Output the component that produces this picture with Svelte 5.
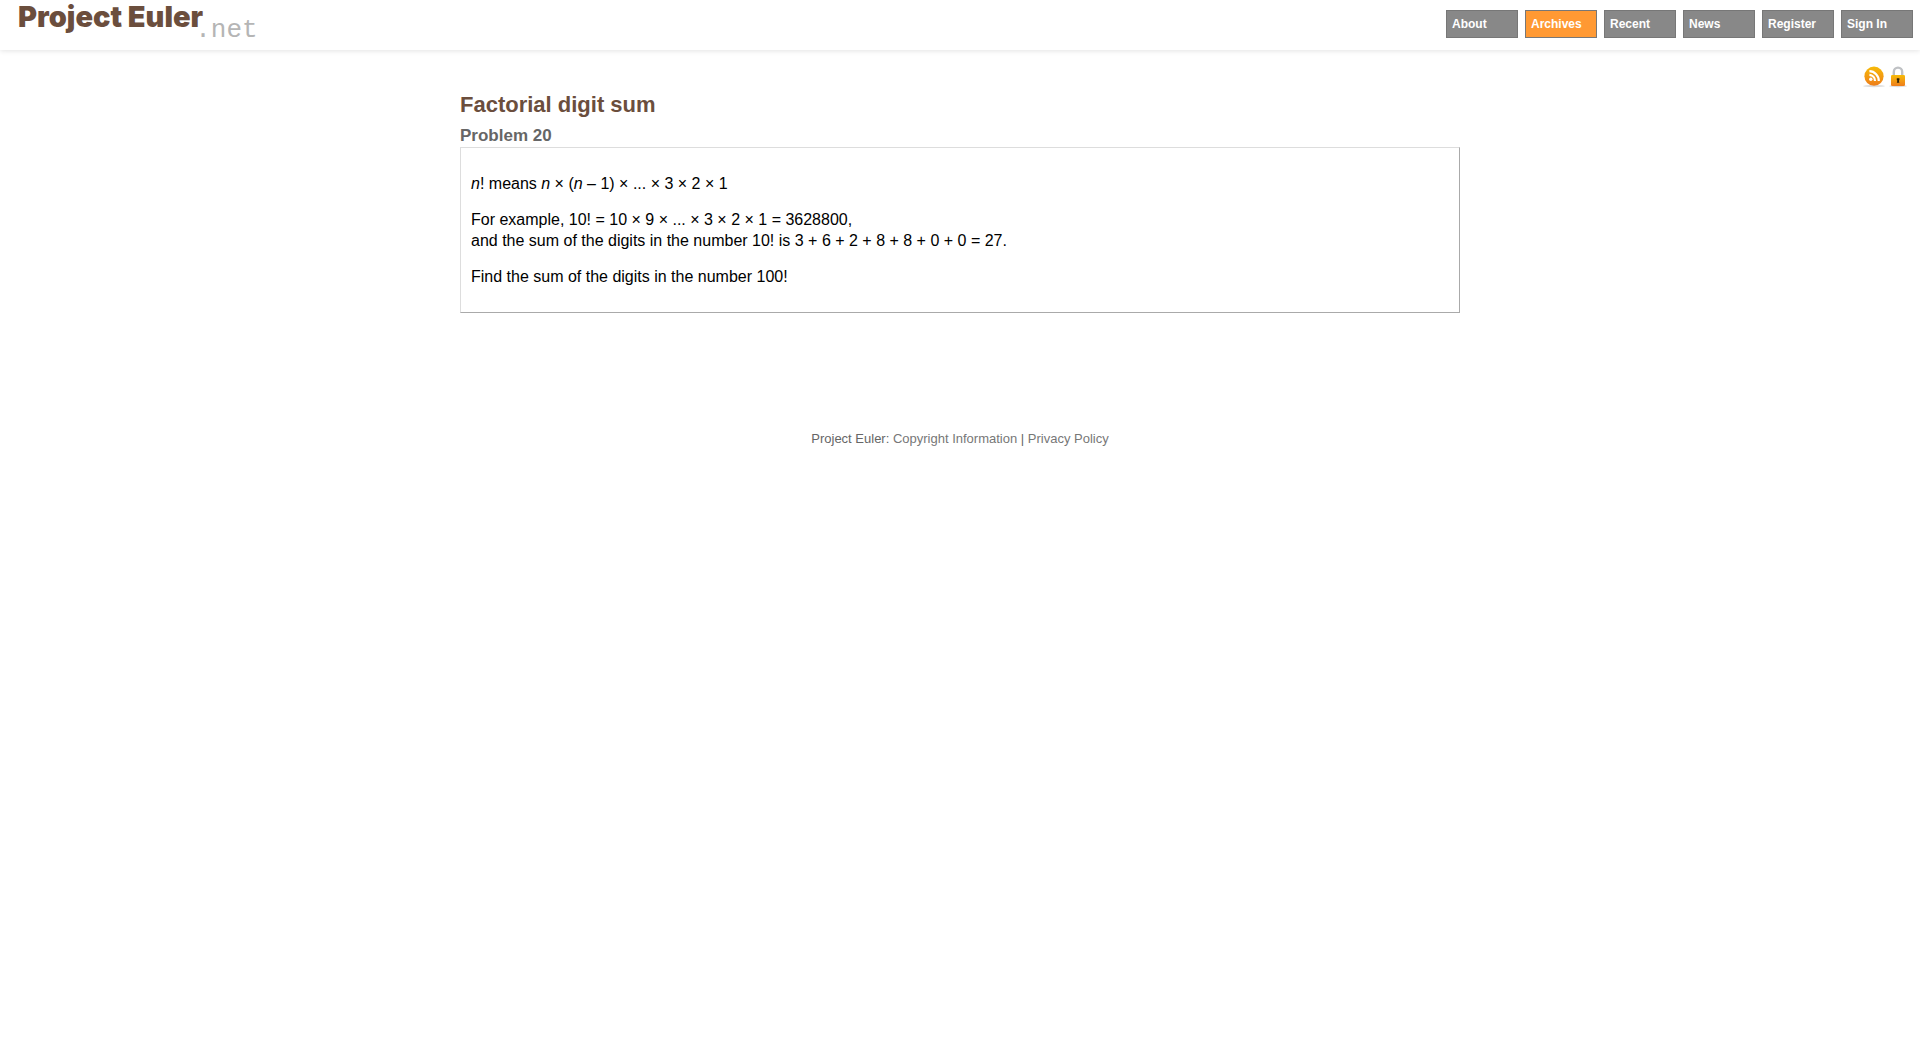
<script>
  const links = ['About', 'Archives', 'Recent', 'News', 'Register', 'Sign In'];
  const current = 'Archives';
</script>

<svelte:head><title>Problem 20 - Project Euler</title></svelte:head>

<header>
  <a class="logo" href="#home"><span class="name">Project Euler</span><span class="net">.net</span></a>
  <nav aria-label="Main">
    {#each links as link}
      <a href={'#' + link} class:current={link === current}>{link}</a>
    {/each}
  </nav>
</header>

<div class="tools">
  <a href="#rss" aria-label="RSS feed">
    <svg width="22" height="22" viewBox="0 0 22 22">
      <defs>
        <linearGradient id="gold" x1="0" y1="0" x2="0" y2="1">
          <stop offset="0" stop-color="#f7bb08" />
          <stop offset="1" stop-color="#ee7d1b" />
        </linearGradient>
      </defs>
      <ellipse cx="11" cy="20" rx="11" ry="1.2" fill="#ddd" />
      <circle cx="11" cy="10.2" r="9.6" fill="url(#gold)" />
      <circle cx="7.8" cy="13.2" r="1.7" fill="#fff" />
      <path d="M6.4 8.9a6 6 0 0 1 5.6 6M6.4 5.2a9.6 9.6 0 0 1 9.4 9.8" fill="none" stroke="#fff" stroke-width="2.2" />
    </svg>
  </a>
  <a href="#secure" aria-label="Secure connection">
    <svg width="18" height="22" viewBox="0 0 18 22">
      <ellipse cx="9" cy="20" rx="9" ry="1.2" fill="#ddd" />
      <path d="M4.8 10V6a4.2 4.4 0 0 1 8.4 0v4" fill="none" stroke="#bfc1c4" stroke-width="2.4" />
      <rect x="2" y="9" width="14" height="11" rx="1.2" fill="url(#gold)" />
      <path d="M7.8 12.2h2.6v1.8l-.6.8.6 2h-2.6l.6-2-.6-.8z" fill="#2d2107" />
    </svg>
  </a>
</div>

<main>
  <h1>Factorial digit sum</h1>
  <h2>Problem 20</h2>
  <section class="problem">
    <p><i>n</i>! means <i>n</i> × (<i>n</i> – 1) × ... × 3 × 2 × 1</p>
    <p>For example, 10! = 10 × 9 × ... × 3 × 2 × 1 = 3628800,<br />and the sum of the digits in the number 10! is 3 + 6 + 2 + 8 + 8 + 0 + 0 = 27.</p>
    <p>Find the sum of the digits in the number 100!</p>
  </section>
</main>

<footer>Project Euler: <a href="#copyright">Copyright Information</a> | <a href="#privacy">Privacy Policy</a></footer>

<style>
  :global(body) {
    background: #fff;
    color: #000;
    font: 16px/21px "Liberation Sans", Arial, sans-serif;
  }
  a {
    text-decoration: none;
  }
  header {
    display: flex;
    justify-content: space-between;
    align-items: flex-start;
    box-sizing: border-box;
    min-height: 50px;
    padding: 0 7px 0 18px;
    box-shadow: 0 1px 5px #e4e4e4;
  }
  .logo {
    display: flex;
    align-items: flex-start;
  }
  .name {
    color: #6b4e3d;
    font: 900 29px/34px Inter, "Liberation Sans", sans-serif;
  }
  .net {
    margin: 14px 0 0 -8px;
    color: #b5b5b5;
    font: 26px/32px "Liberation Mono", monospace;
  }
  nav {
    display: flex;
    gap: 7px;
    padding-top: 10px;
  }
  nav a {
    box-sizing: border-box;
    width: 72px;
    padding: 0 5px;
    border: 1px solid #777;
    background: #888;
    color: #fff;
    font-size: 12px;
    font-weight: bold;
    line-height: 26px;
  }
  nav a.current {
    background: #f93;
  }
  .tools {
    display: flex;
    justify-content: flex-end;
    gap: 4px;
    padding: 16px 13px 0 0;
  }
  .tools svg {
    display: block;
  }
  main {
    box-sizing: border-box;
    max-width: 1000px;
    margin: 0 auto;
  }
  h1 {
    margin: 0;
    color: #6b4e3d;
    font-size: 22px;
    line-height: 34px;
  }
  h2 {
    margin: 2px 0 0;
    color: #666;
    font-size: 17px;
    line-height: 23px;
  }
  .problem {
    padding: 10px;
    border: 1px solid;
    border-color: #ddd #aaa #aaa #ddd;
  }
  p {
    margin: 15px 0;
  }
  footer {
    margin-top: 115px;
    color: #666;
    font-size: 13px;
    text-align: center;
  }
  footer a {
    color: #777;
  }
</style>
